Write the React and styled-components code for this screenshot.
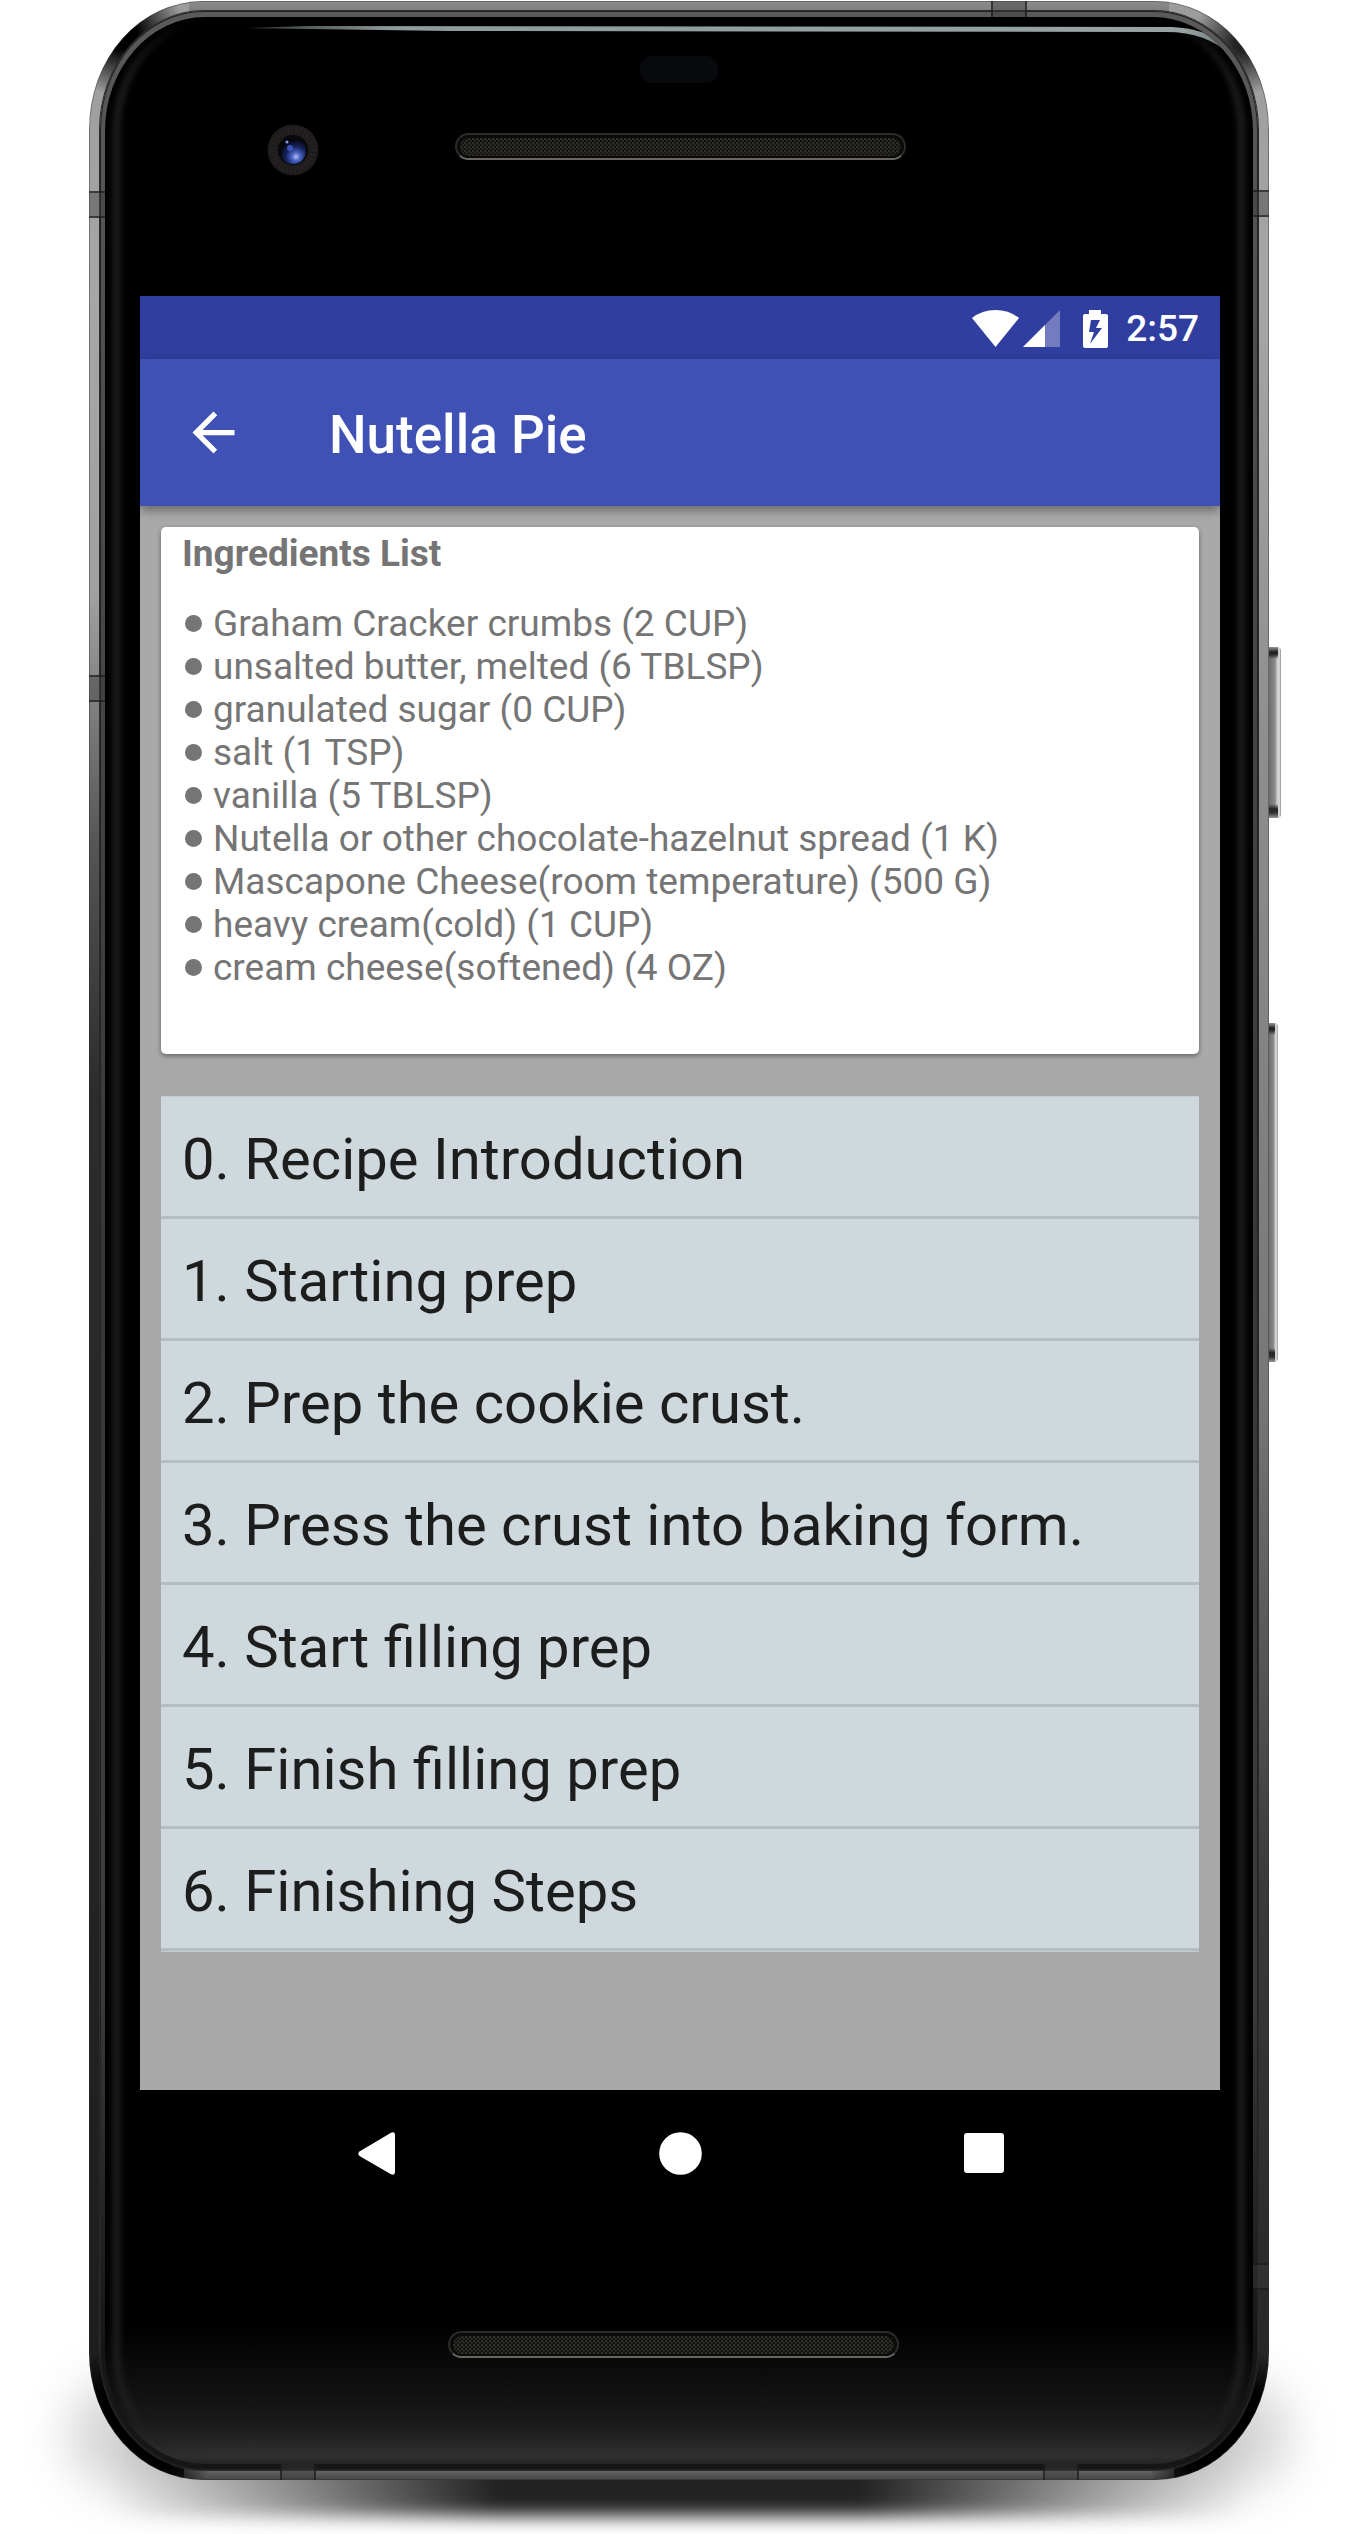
import React from "react";
import styled, { createGlobalStyle } from "styled-components";

const GlobalStyle = createGlobalStyle`
  *, *::before, *::after { box-sizing: border-box; }
  body {
    margin: 0;
    background: #fff;
    font-family: Roboto, "Noto Sans", sans-serif;
  }
  ul, ol, h1, h2 { margin: 0; padding: 0; list-style: none; }
  button { border: 0; margin: 0; padding: 0; background: none; color: inherit; font: inherit; cursor: pointer; }
`;

/* ---------- device ---------- */

const Page = styled.div`
  position: relative;
  z-index: 0;
  overflow: hidden;
  padding: 1px 101px 54px 89px;
`;

const Device = styled.div`
  position: relative;
`;

const SoftShadow = styled.div`
  position: absolute;
  z-index: -1;
  left: -20px;
  right: -20px;
  bottom: -10px;
  height: 110px;
  border-radius: 60px;
  background: rgba(0, 0, 0, 0.17);
  filter: blur(24px);
`;

const CoreShadow = styled.div`
  position: absolute;
  z-index: -1;
  left: 20px;
  right: 20px;
  bottom: -36px;
  height: 80px;
  background: linear-gradient(90deg, transparent, rgba(30, 30, 30, 0.45) 16%, #222 34%, #222 66%, rgba(30, 30, 30, 0.45) 84%, transparent);
  filter: blur(9px);
`;

const Frame = styled.div`
  position: relative;
  padding: 10px 11px;
  border-radius: 114px / 128px;
  background:
    radial-gradient(circle at 34px 34px, #000 14px, transparent 62px),
    radial-gradient(circle at calc(100% - 26px) 42px, #222 8px, transparent 52px),
    radial-gradient(circle at 34px calc(100% - 40px), #000 50px, transparent 92px),
    radial-gradient(circle at calc(100% - 34px) calc(100% - 40px), #000 50px, transparent 92px),
    linear-gradient(#8d8d8d, #7c7c7c) 50% 0 / calc(100% - 200px) 12px no-repeat,
    linear-gradient(#6f6f6f, #444) 50% 100% / calc(100% - 190px) 12px no-repeat,
    linear-gradient(#9c9c9c, #a6a6a6 12%, #a0a0a0 24%, #555 34%, #2c2c2c 44%, #1c1c1c) 0 0 / 50% 100% no-repeat,
    linear-gradient(#9c9c9c, #a6a6a6 12%, #8e8e8e 30%, #777 56%, #3a3a3a 76%, #222) 100% 0 / 50% 100% no-repeat;
  box-shadow: inset 0 0 0 1px rgba(40, 44, 44, 0.4);
`;

const Rim = styled.div`
  padding: 6px 5px;
  border-radius: 104px / 119px;
  background: linear-gradient(#5c5959, #4a4a4a 20%, #383838 50%, #3c3c3c 80%, #161616 95%);
  box-shadow: inset 0 0 0 1px #222, 0 0 0 1px #2b2b2b;
`;

const Glass = styled.div`
  position: relative;
  padding: 0 33px 0 35px;
  border-radius: 100px / 114px;
  overflow: hidden;
  background: linear-gradient(transparent calc(100% - 140px), #101010 calc(100% - 75px), #1a1a1a calc(100% - 40px), #303030 calc(100% - 8px), #242424) #000;

  &::before {
    content: "";
    position: absolute;
    inset: 6px 8px 4px 8px;
    border: solid #202020;
    border-width: 0 7px;
    border-radius: 94px / 108px;
    filter: blur(3px);
    pointer-events: none;
  }
`;

const Band = styled.span`
  position: absolute;
  background: rgba(60, 60, 60, 0.42);
  border: solid rgba(20, 20, 20, 0.6);
  ${({ $side, $at }) => {
    if ($side === "left" || $side === "right")
      return `${$side}: 0; top: ${$at}px; width: 16px; height: 27px; border-width: 2px 0;`;
    return `${$side}: 0; ${$at > 0 ? `left: ${$at}px` : `right: ${-$at}px`}; width: 36px; height: 16px; border-width: 0 2px;`;
  }}
`;

const SideKey = styled.span`
  position: absolute;
  left: 100%;
  top: ${({ $top }) => $top}px;
  width: ${({ $width }) => $width}px;
  height: ${({ $height }) => $height}px;
  border-radius: 0 4px 4px 0;
  background:
    linear-gradient(#999, #222 5px, #222 7px, transparent 12px, transparent calc(100% - 14px), #222 calc(100% - 9px), #333 calc(100% - 5px), #999) 0 0 / calc(100% - 3px) 100% no-repeat,
    linear-gradient(90deg, #6c6f6e, #8a8a8a 50%, #cfd1d0 70%, #d2d4d3 88%, #8a8a8a);
`;

const TopBezel = styled.header`
  position: relative;
  height: 279px;
`;

const Highlight = styled.svg`
  position: absolute;
  left: 105px;
  top: 9px;
  width: calc(100% - 92px);
  height: 32px;
`;

const Sensor = styled.span`
  position: absolute;
  left: 500px;
  top: 39px;
  width: 78px;
  height: 27px;
  border-radius: 12px;
  background: #07090d;
`;

const Camera = styled.svg`
  position: absolute;
  left: 127px;
  top: 107px;
  width: 53px;
  height: 52px;
`;

const Speaker = styled.div`
  position: absolute;
  left: ${({ $left }) => $left}px;
  top: ${({ $top }) => $top}px;
  width: 451px;
  height: 27px;
  border: 2px solid #2b2b2b;
  border-bottom-color: #6a6763;
  border-radius: 14px;
  background: #0b0b0a;

  &::before {
    content: "";
    position: absolute;
    inset: 3px 3px 2px;
    border-radius: 10px;
    background:
      radial-gradient(circle at 1px 1px, #47433a, transparent 2px) 0 0 / 4px 4px,
      radial-gradient(circle at 3px 3px, #3b382f, transparent 2px) 0 0 / 4px 4px;
  }
`;

const BottomBezel = styled.footer`
  position: relative;
  height: 248px;
`;

/* ---------- app ---------- */

const Screen = styled.main`
  position: relative;
  display: flex;
  flex-direction: column;
  background: #a9a9a9;
`;

const StatusBar = styled.div`
  display: flex;
  align-items: center;
  justify-content: flex-end;
  gap: 18px;
  height: 63px;
  padding: 2px 21px 0;
  background: #303e9f;
  color: #fff;
  font-size: 37px;
  font-weight: 500;
  line-height: 43px;
`;

const Signals = styled.span`
  display: flex;
  gap: 4px;
  padding-right: 5px;
`;

const AppBar = styled.div`
  position: relative;
  display: flex;
  align-items: center;
  gap: 84px;
  height: 147px;
  padding: 0 42px;
  background: #3f51b5;
  color: #fff;
  box-shadow: 0 4px 10px rgba(0, 0, 0, 0.4);
`;

const BackButton = styled.button`
  display: flex;
`;

const Title = styled.h1`
  padding-top: 4px;
  font-size: 53px;
  font-weight: 500;
  line-height: 62px;
`;

const Content = styled.div`
  display: flex;
  flex-direction: column;
  gap: 42px;
  padding: 21px 21px 138px;
`;

const Card = styled.section`
  padding: 5px 21px 65px;
  border-radius: 5px;
  background: #fff;
  color: #757575;
  font-size: 37px;
  line-height: 43px;
  box-shadow: 0 2px 5px rgba(0, 0, 0, 0.4);
`;

const CardTitle = styled.h2`
  margin-bottom: 27px;
  font-size: 37px;
  font-weight: 700;
`;

const Ingredient = styled.li`
  display: flex;
  align-items: center;
  gap: 11px;
  padding-left: 3px;

  &::before {
    content: "";
    flex: none;
    width: 17px;
    height: 17px;
    border-radius: 50%;
    background: currentColor;
  }
`;

const Steps = styled.ol`
  border: solid #c3cdd0;
  border-width: 1px 0;
  background: #cfd8dd;
`;

const StepButton = styled.button`
  display: block;
  width: 100%;
  height: 122px;
  padding: 4px 21px 0;
  border-bottom: 3px solid #b5bec0;
  color: #1c1e1e;
  font-size: 58px;
  line-height: 68px;
  text-align: left;
`;

const NavBar = styled.nav`
  display: flex;
  justify-content: center;
  height: 126px;
  background: #000;
`;

const NavButton = styled.button`
  display: flex;
  align-items: center;
  justify-content: center;
  width: 304px;
`;

const ingredients = [
  "Graham Cracker crumbs (2 CUP)",
  "unsalted butter, melted (6 TBLSP)",
  "granulated sugar (0 CUP)",
  "salt (1 TSP)",
  "vanilla (5 TBLSP)",
  "Nutella or other chocolate-hazelnut spread (1 K)",
  "Mascapone Cheese(room temperature) (500 G)",
  "heavy cream(cold) (1 CUP)",
  "cream cheese(softened) (4 OZ)",
];

const steps = [
  "Recipe Introduction",
  "Starting prep",
  "Prep the cookie crust.",
  "Press the crust into baking form.",
  "Start filling prep",
  "Finish filling prep",
  "Finishing Steps",
];

const bands = [
  ["left", 190],
  ["left", 674],
  ["right", 189],
  ["right", 2262],
  ["top", -242],
  ["bottom", 191],
  ["bottom", -190],
];

function CameraLens() {
  return (
    <Camera viewBox="0 0 53 52" aria-hidden="true">
      <defs>
        <radialGradient id="lens" cx="62%" cy="72%" r="65%">
          <stop offset="0" stopColor="#aebdf0" />
          <stop offset="0.25" stopColor="#4a63c4" />
          <stop offset="0.6" stopColor="#17235c" />
          <stop offset="1" stopColor="#05070f" />
        </radialGradient>
      </defs>
      <circle cx="26" cy="26" r="25.5" fill="#1e1b1b" />
      <circle cx="26" cy="26" r="20" fill="none" stroke="#2a2727" strokeWidth="7" strokeDasharray="2 2" opacity="0.6" />
      <circle cx="26" cy="26" r="15" fill="#07080c" />
      <circle cx="26" cy="27" r="13" fill="url(#lens)" />
      <circle cx="23" cy="24" r="3" fill="#3d55bb" />
      <circle cx="20" cy="18" r="1.5" fill="#8c9be0" />
    </Camera>
  );
}

export default function App() {
  return (
    <>
      <GlobalStyle />
      <Page>
        <Device>
          <SoftShadow />
          <CoreShadow />
          <SideKey $top={646} $height={171} $width={12} />
          <SideKey $top={1022} $height={339} $width={9} />
          <Frame>
            <Rim>
              <Glass>
                <TopBezel>
                  <Highlight viewBox="0 0 960 32" preserveAspectRatio="none" aria-hidden="true">
                    <defs>
                      <linearGradient id="shine">
                        <stop offset="0" stopColor="#8f9b9b" stopOpacity="0.3" />
                        <stop offset="0.15" stopColor="#8f9b9b" />
                        <stop offset="0.95" stopColor="#98a3a3" />
                        <stop offset="1" stopColor="#6c7474" />
                      </linearGradient>
                    </defs>
                    <path fill="url(#shine)" d="M0 2 60 0 895 1C930 1 953 14 960 31 944 15 924 6 895 6L200 5Z" />
                  </Highlight>
                  <Sensor />
                  <CameraLens />
                  <Speaker $left={315} $top={116} />
                </TopBezel>

                <Screen>
                  <StatusBar>
                    <Signals>
                      <svg width="47" height="37" viewBox="0 0 47 37" fill="#fff" role="img" aria-label="Wi-Fi">
                        <path d="M0 8Q10 0 23.5 0T47 8L23.5 37Z" />
                      </svg>
                      <svg width="37" height="37" viewBox="0 0 37 37" fill="#fff" role="img" aria-label="Mobile signal">
                        <path d="M37 0V37H0Z" opacity="0.32" />
                        <path d="M22 15V37H0Z" />
                      </svg>
                    </Signals>
                    <svg width="25" height="38" viewBox="0 0 25 38" fill="#fff" role="img" aria-label="Battery charging">
                      <path
                        fillRule="evenodd"
                        d="M6 0H18V4H23Q25 4 25 6V36Q25 38 23 38H2Q0 38 0 36V6Q0 4 2 4H6ZM8 10 6 22H11L7 34 19 18H13L17 10Z"
                      />
                    </svg>
                    <time>2:57</time>
                  </StatusBar>

                  <AppBar>
                    <BackButton aria-label="Back">
                      <svg width="63" height="63" viewBox="0 0 24 24" fill="#fff" aria-hidden="true">
                        <path d="M20 11H7.83l5.59-5.59L12 4l-8 8 8 8 1.41-1.41L7.83 13H20v-2z" />
                      </svg>
                    </BackButton>
                    <Title>Nutella Pie</Title>
                  </AppBar>

                  <Content>
                    <Card>
                      <CardTitle>Ingredients List</CardTitle>
                      <ul>
                        {ingredients.map((text) => (
                          <Ingredient key={text}>{text}</Ingredient>
                        ))}
                      </ul>
                    </Card>
                    <Steps>
                      {steps.map((text, i) => (
                        <li key={text}>
                          <StepButton>{`${i}. ${text}`}</StepButton>
                        </li>
                      ))}
                    </Steps>
                  </Content>
                </Screen>

                <NavBar>
                  <NavButton aria-label="Back">
                    <svg width="37" height="43" viewBox="0 0 37 43" fill="#fff" aria-hidden="true">
                      <path d="M1.5 19.5 33 .8Q37-.8 37 3.500V39.500Q37 43.800 33 42.200L1.500 24Q-1 21.800 1.500 19.500Z" />
                    </svg>
                  </NavButton>
                  <NavButton aria-label="Home">
                    <svg width="43" height="43" viewBox="0 0 43 43" fill="#fff" aria-hidden="true">
                      <circle cx="21.500" cy="21.500" r="21.300" />
                    </svg>
                  </NavButton>
                  <NavButton aria-label="Recent apps">
                    <svg width="40" height="40" viewBox="0 0 40 40" fill="#fff" aria-hidden="true">
                      <rect width="40" height="40" rx="3" />
                    </svg>
                  </NavButton>
                </NavBar>

                <BottomBezel>
                  <Speaker $left={308} $top={115} />
                </BottomBezel>
              </Glass>
            </Rim>
            {bands.map(([side, at]) => (
              <Band key={side + at} $side={side} $at={at} />
            ))}
          </Frame>
        </Device>
      </Page>
    </>
  );
}
